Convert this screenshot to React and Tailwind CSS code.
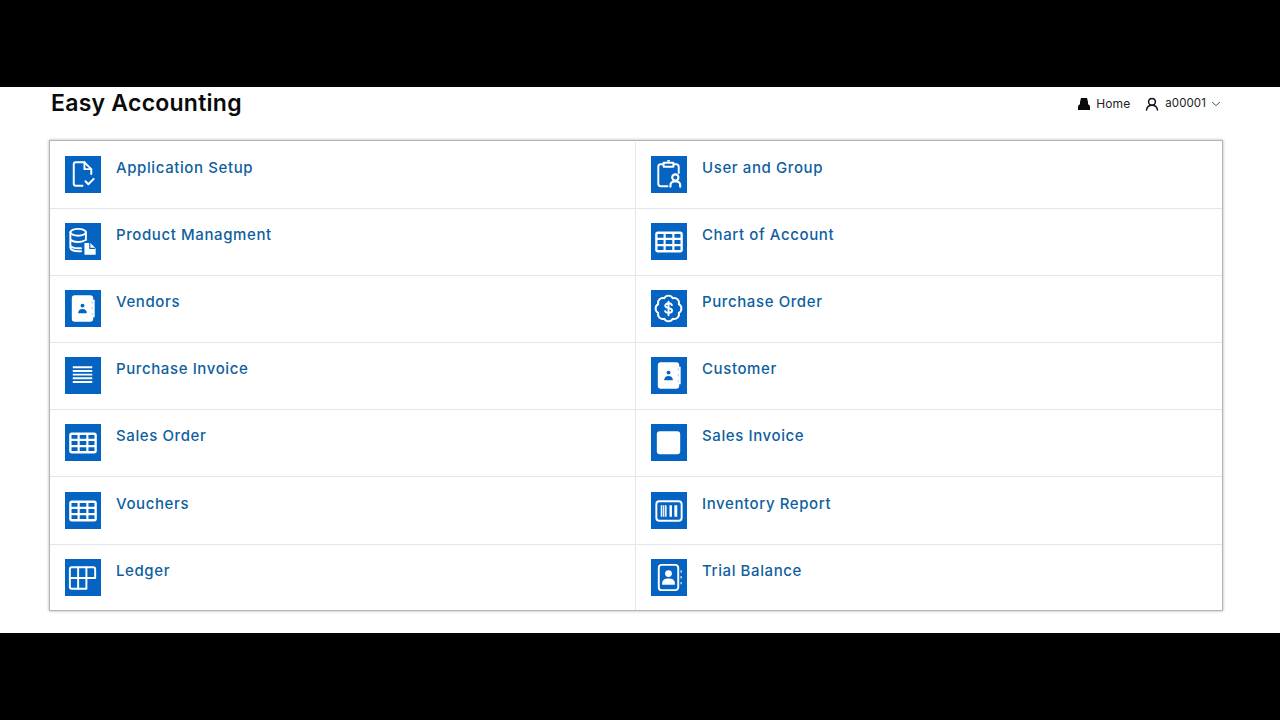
import React from "react";
import { ChevronDown } from "lucide-react";

const s = { fill: "none", stroke: "#fff", strokeWidth: 2, strokeLinecap: "round", strokeLinejoin: "round" };
const BLUE = "#0563c1";

const TableIcon = () => (
  <>
    <rect x="5.500" y="9.500" width="26" height="19" rx="1.500" {...s} strokeWidth="2.400" />
    <path d="M5.500 15.800h26M5.500 22.200h26M14 9.500v19M23 9.500v19" {...s} strokeWidth="2.200" strokeLinecap="butt" />
  </>
);

const BookIcon = () => (
  <>
    <path d="M10 5h16a3 3 0 0 1 3 3v1.500h1.500v18H29V29a3 3 0 0 1-3 3H10a3 3 0 0 1-3-3V8a3 3 0 0 1 3-3z" fill="#fff" />
    <circle cx="18" cy="15.500" r="2" fill={BLUE} />
    <path d="M13.500 23.500c0-3 2-4.500 4.500-4.500s4.500 1.500 4.500 4.500z" fill={BLUE} />
    <path d="M28 11v2.500M28 17v2.500M28 23v2.500" stroke="#bcd5ef" strokeWidth="1.200" />
  </>
);

const icons = {
  setup: (
    <>
      <path d="M18 30h-7a2 2 0 0 1-2-2V8a2 2 0 0 1 2-2h9l7 7v5" {...s} />
      <path d="M20 6v7h7" {...s} />
      <path d="M21 25.500l3 3 5.500-5.500" {...s} />
    </>
  ),
  product: (
    <>
      <ellipse cx="13.500" cy="9" rx="8" ry="3.500" {...s} />
      <path d="M5.500 9v16c0 2 3.500 3.500 8 3.500h3M5.500 15.500c0 2 3.500 3.500 8 3.500 2.500 0 5-.5 6.500-1.500M5.500 22c0 2 3.500 3.500 8 3.500h3M21.500 9v8" {...s} />
      <path d="M20 20h6l5.500 5.500V32H20z" fill="#fff" />
      <path d="M25.500 20v5.500H31" stroke={BLUE} strokeWidth="1.200" fill="none" />
    </>
  ),
  book: <BookIcon />,
  lines: <path d="M8 10h20M8 13.800h20M8 17.600h20M8 21.400h20M8 25.200h20" stroke="#fff" strokeWidth="2" fill="none" />,
  table: <TableIcon />,
  ledger: (
    <>
      <path d="M7 8h22a2 2 0 0 1 2 2v9h-9v11H7a2 2 0 0 1-2-2V10a2 2 0 0 1 2-2z" {...s} />
      <path d="M5 19h17M13.500 8v22M22 8v11" {...s} />
    </>
  ),
  user: (
    <>
      <path d="M12 8H10a2.500 2.500 0 0 0-2.500 2.500V28a2.500 2.500 0 0 0 2.500 2.500h7M24 8h2a2.500 2.500 0 0 1 2.500 2.500V17" {...s} />
      <path d="M13 6.500h10v4H13z" {...s} />
      <path d="M18.500 4.500h-1" {...s} />
      <circle cx="25" cy="21.500" r="3.200" {...s} strokeWidth="2.200" />
      <path d="M20 31v-1.500a4 4 0 0 1 4-4h2a4 4 0 0 1 4 4V31" {...s} strokeWidth="2.200" />
    </>
  ),
  order: (
    <>
      <path d="M22.400 7.900A5 5 0 0 1 28.600 14.100A5 5 0 0 1 28.600 22.900A5 5 0 0 1 22.400 29.100A5 5 0 0 1 13.600 29.100A5 5 0 0 1 7.400 22.900A5 5 0 0 1 7.400 14.100A5 5 0 0 1 13.600 7.900A5 5 0 0 1 22.400 7.900z" {...s} />
      <path d="M21.500 15c-.5-1.100-1.800-1.800-3.500-1.800-1.900 0-3.300.9-3.300 2.400 0 3.300 7 1.800 7 5 0 1.600-1.600 2.400-3.700 2.400-1.700 0-3-.7-3.500-1.900M18 11.500v14" {...s} />
    </>
  ),
  invoice: <rect x="6" y="7" width="24" height="23.500" rx="3" fill="#fff" />,
  inventory: (
    <>
      <rect x="5.500" y="9" width="26" height="20" rx="3" {...s} />
      <path d="M10 13h6v12h-6zM19 13h2.500v12H19zM24 13h3v12h-3z" fill="#fff" />
      <path d="M12 13v12M14 13v12" stroke={BLUE} strokeWidth=".8" fill="none" />
    </>
  ),
  trial: (
    <>
      <path d="M11 5.500h14a3 3 0 0 1 3 3v20a3 3 0 0 1-3 3H11a3 3 0 0 1-3-3v-20a3 3 0 0 1 3-3z" {...s} />
      <circle cx="18" cy="14.500" r="3.500" fill="#fff" />
      <path d="M11.500 26v-2c0-3 3-4.500 6.500-4.500s6.500 1.500 6.500 4.500v2z" fill="#fff" />
      <path d="M31 11v2.500M31 17v2.500M31 23v2.500" stroke="#bcd5ef" strokeWidth="1.500" />
    </>
  ),
};

const rows = [
  ["Application Setup", "setup", "User and Group", "user"],
  ["Product Managment", "product", "Chart of Account", "table"],
  ["Vendors", "book", "Purchase Order", "order"],
  ["Purchase Invoice", "lines", "Customer", "book"],
  ["Sales Order", "table", "Sales Invoice", "invoice"],
  ["Vouchers", "table", "Inventory Report", "inventory"],
  ["Ledger", "ledger", "Trial Balance", "trial"],
];

const Cell = ({ label, icon }) => (
  <a className="flex flex-1 gap-[15px] pl-[15px] pt-[14.2px]">
    <span className="h-[37px] w-[36px] shrink-0 bg-[#0563c1]">
      <svg viewBox="0 0 37 37" className="h-[37px] w-[36px]">
        {icons[icon]}
      </svg>
    </span>
    <span className="text-[15px] font-medium leading-[24px] tracking-[0.6px] text-[#0f5f9f]">{label}</span>
  </a>
);

const App = () => {
  return (
    <div className="flex h-[720px] w-[1280px] flex-col bg-black font-['Inter','Liberation_Sans',sans-serif]">
      <div className="h-[87px]" />
      <div className="h-[546px] bg-white px-[49px]">
        <div className="flex h-[34px] items-center justify-between pl-[2px] pr-[8px]">
          <h1 className="-mt-[1px] text-[23px] font-semibold leading-none tracking-[0.25px] text-[#0a0a0a]">Easy Accounting</h1>
          <div className="flex items-center text-[12px] tracking-[0.1px] text-[#222]">
            <svg viewBox="0 0 14 14" className="mr-[5px] h-[14px] w-[14px]">
              <path d="M4 1h6l1 4v2l2 2v4H1V9l2-2V5z" fill="#0a0a0a" />
            </svg>
            <span>Home</span>
            <svg viewBox="0 0 14 14" className="ml-[15px] mr-[6px] h-[14px] w-[14px]" fill="none" stroke="#111" strokeWidth="1.500" strokeLinecap="round">
              <circle cx="7" cy="4.800" r="3.400" />
              <path d="M1.500 13c.5-3 2.500-4.800 5.500-4.800s5 1.800 5.500 4.800" />
            </svg>
            <span className="text-[11.500px]">a00001</span>
            <ChevronDown className="ml-[3px]" size={14} strokeWidth={1.500} />
          </div>
        </div>
        <div className="mt-[19px] flex h-[471px] w-[1174px] flex-col border border-[#b4b4b4] pt-[0.500px] shadow-[0_0_3px_rgba(0,0,0,0.3)]">
          {rows.map((r) => (
            <div key={r[0]} className="flex h-[67.200px] border-b border-[#e6e6e6] last:flex-1 last:border-b-0">
              <div className="flex w-[586px] border-r border-[#e6e6e6]">
                <Cell label={r[0]} icon={r[1]} />
              </div>
              <div className="flex flex-1">
                <Cell label={r[2]} icon={r[3]} />
              </div>
            </div>
          ))}
        </div>
      </div>
    </div>
  );
};

export default App;
